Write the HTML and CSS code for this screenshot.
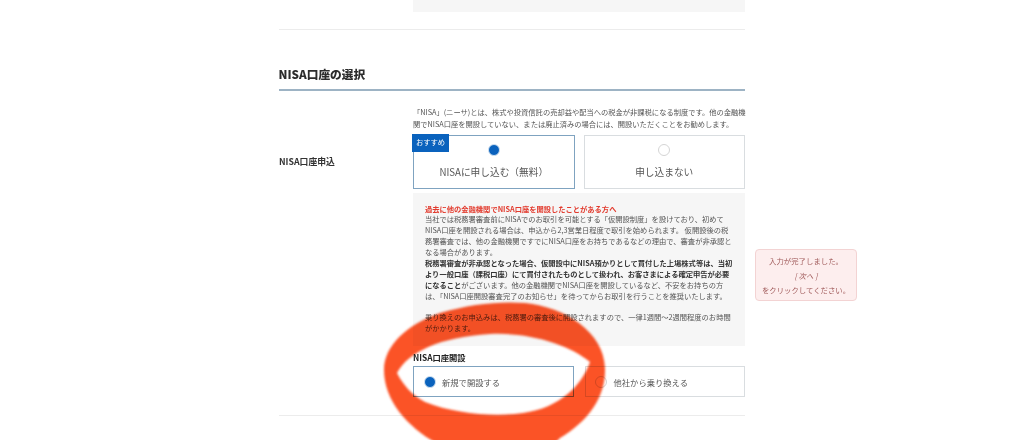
FILE: index.html
```html
<!DOCTYPE html>
<html lang="ja">
<head>
<meta charset="utf-8">
<title>NISA口座の選択</title>
<link rel="stylesheet" href="styles.css">
</head>
<body>
<main class="page">
  <div class="row-top"><div class="top-box"></div></div>
  <hr class="divider first">
  <h2 class="section-title">NISA口座の選択</h2>
  <div class="form-row">
    <div class="form-label">NISA口座申込</div>
    <div class="form-body">
      <p class="intro">「NISA」(ニーサ)とは、株式や投資信託の売却益や配当への税金が非課税になる制度です。他の金融機<br>関でNISA口座を開設していない、または廃止済みの場合には、開設いただくことをお勧めします。</p>
      <div class="choices">
        <div class="choice tall selected">
          <span class="badge">おすすめ</span>
          <span class="radio on"></span>
          <span class="choice-text">NISAに申し込む（無料）</span>
        </div>
        <div class="choice tall">
          <span class="radio"></span>
          <span class="choice-text">申し込まない</span>
        </div>
      </div>
      <div class="note">
        <p class="note-title">過去に他の金融機関でNISA口座を開設したことがある方へ</p>
        <p>当社では税務署審査前にNISAでのお取引を可能とする「仮開設制度」を設けており、初めて<br>NISA口座を開設される場合は、申込から2,3営業日程度で取引を始められます。 仮開設後の税<br>務署審査では、他の金融機関ですでにNISA口座をお持ちであるなどの理由で、審査が非承認と<br>なる場合があります。<br><b>税務署審査が非承認となった場合、仮開設中にNISA預かりとして買付した上場株式等は、当初<br>より一般口座（課税口座）にて買付されたものとして扱われ、お客さまによる確定申告が必要<br>になること</b>がございます。他の金融機関でNISA口座を開設しているなど、不安をお持ちの方<br>は、「NISA口座開設審査完了のお知らせ」を待ってからお取引を行うことを推奨いたします。</p>
        <p class="note-last">乗り換えのお申込みは、税務署の審査後に開設されますので、一律1週間〜2週間程度のお時間<br>がかかります。</p>
      </div>
      <h3 class="sub-label">NISA口座開設</h3>
      <div class="choices">
        <div class="choice wide selected">
          <span class="radio on"></span>
          <span class="wide-text">新規で開設する</span>
        </div>
        <div class="choice wide">
          <span class="radio"></span>
          <span class="wide-text">他社から乗り換える</span>
        </div>
      </div>
    </div>
  </div>
  <hr class="divider last">
</main>
<aside class="toast">入力が完了しました。<br><i>[ 次へ ]</i><br>をクリックしてください。</aside>
<svg class="ring" width="1024" height="440" viewBox="0 0 1024 440" aria-hidden="true">
  <defs><filter id="soft" x="-5%" y="-5%" width="110%" height="110%"><feGaussianBlur stdDeviation="1"/></filter></defs>
  <path filter="url(#soft)" fill="#fb5228" fill-rule="evenodd" d="M384 370C384 345 408 324 440 313C470 304 500 301 525 303C565 307 604 332 605 368C606 395 590 420 560 438L552 446L442 446C410 430 384 402 384 370ZM397 373C408 352 440 337 490 334C530 332 570 345 590 362C582 385 560 408 523 413C495 417 455 414 425 402C412 395 403 385 397 373Z"/>
</svg>
</body>
</html>
```
FILE: styles.css
```css
* { box-sizing: border-box; }
html, body { margin: 0; padding: 0; }
body {
  width: 1024px;
  height: 440px;
  overflow: hidden;
  background: #fff;
  color: #333;
  font-family: "Noto Sans CJK JP", "Noto Sans", sans-serif;
}
.page { width: 466px; margin-left: 279px; filter: blur(0.25px); }
.row-top { display: flex; justify-content: flex-end; }
.top-box { width: 332px; height: 12px; background: #f6f6f6; }
.divider { border: 0; height: 1px; margin: 0; background: #ececec; }
.divider.first { margin-top: 17px; }
.section-title {
  margin: 35px 0 0 -0.5px;
  height: 23.5px;
  font-size: 11.7px;
  line-height: 18px;
  font-weight: 900;
  color: #2c2c2c;
}
.form-row {
  display: flex;
  border-top: 2px solid #9db3c4;
}
.form-label {
  width: 134px;
  padding-top: 64.5px;
  font-size: 8.8px;
  line-height: 14px;
  font-weight: 700;
  color: #333;
}
.form-body { width: 332px; padding-top: 15.5px; }
.intro {
  margin: 0 0 5px;
  font-size: 7.27px;
  line-height: 12px;
  color: #555;
  white-space: nowrap;
}
.choices { display: flex; justify-content: space-between; }
.choice {
  position: relative;
  width: 161.5px;
  border: 1px solid #d9dde0;
  background: #fff;
}
.choice.selected { border-color: #7fa3c0; }
.choice.tall {
  height: 54px;
  display: flex;
  flex-direction: column;
  align-items: center;
  padding-top: 8px;
}
.choice.wide {
  width: 160.5px;
  height: 31px;
  display: flex;
  align-items: center;
  gap: 6px;
  padding-left: 10px;
}
.choice.wide + .choice.wide { padding-left: 9px; gap: 7px; }
.radio {
  display: block;
  flex: none;
  width: 12px;
  height: 12px;
  border-radius: 50%;
  border: 1px solid #d5d5d5;
  background: #fff;
}
.radio.on {
  border: 1px solid #cfe0f0;
  background: #0a62bd;
  box-shadow: inset 0 0 0 0.5px #0a62bd;
}
.choice-text { margin-top: 9px; font-size: 9.7px; line-height: 15px; color: #555; }
.wide-text { font-size: 8.3px; line-height: 12px; color: #555; }
.badge {
  position: absolute;
  left: -2px;
  top: -2px;
  width: 37px;
  height: 18px;
  background: #0a62bd;
  color: #fff;
  font-size: 7.3px;
  line-height: 16px;
  text-align: center;
}
.note {
  margin-top: 4px;
  height: 153px;
  padding: 10.5px 0 0 12px;
  background: #f6f6f6;
  font-size: 7.27px;
  line-height: 10.9px;
  color: #555;
  white-space: nowrap;
}
.note p { margin: 0; }
.note b { color: #333; font-weight: 700; }
.note .note-title { color: #e23b2e; font-weight: 700; }
.note .note-last { margin-top: 10.5px; }
.sub-label {
  margin: 5px 0 0;
  height: 15px;
  font-size: 8.3px;
  line-height: 12px;
  font-weight: 700;
  color: #222;
}
.divider.last { margin-top: 18px; }
.toast {
  position: absolute;
  left: 755px;
  top: 249px;
  width: 102px;
  height: 52px;
  padding-top: 4px;
  background: #fdeeee;
  border: 1px solid #f3d3d3;
  border-radius: 4px;
  color: #a05a5a;
  font-size: 7.4px;
  line-height: 14.5px;
  text-align: center;
}
.toast i { font-style: italic; }
.ring { position: absolute; left: 0; top: 0; pointer-events: none; mix-blend-mode: multiply; }
```
